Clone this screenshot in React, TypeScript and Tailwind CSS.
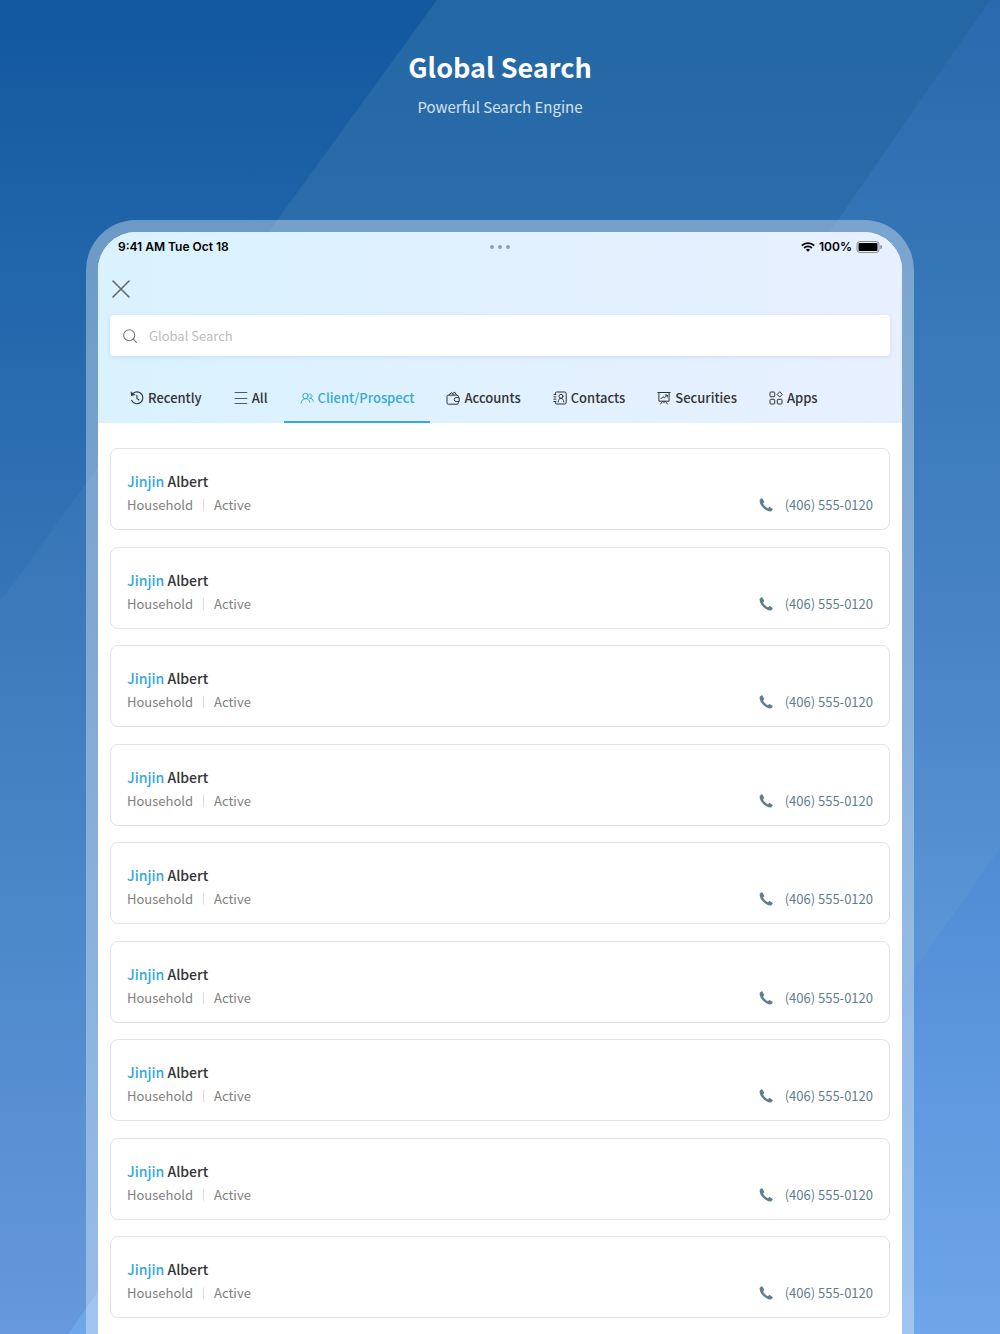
const tabs = [
  { id: "recently", label: "Recently" },
  { id: "all", label: "All" },
  { id: "clients", label: "Client/Prospect" },
  { id: "accounts", label: "Accounts" },
  { id: "contacts", label: "Contacts" },
  { id: "securities", label: "Securities" },
  { id: "apps", label: "Apps" },
]

const results = Array.from({ length: 9 }, (_, i) => ({
  id: i,
  match: "Jinjin",
  rest: "Albert",
  type: "Household",
  status: "Active",
  phone: "(406) 555-0120",
}))

function TabIcon({ id }: { id: string }) {
  if (id === "recently") {
    return (
      <svg viewBox="0 0 14 14" className="size-3.5" fill="none" stroke="currentColor" strokeWidth="1.1" strokeLinecap="round" strokeLinejoin="round">
        <path d="M1.7 4.1A5.9 5.9 0 1 1 1.6 9.3" />
        <path d="M.9 1.2l.6 3.3 3.3-.6z" fill="currentColor" strokeWidth=".6" />
        <path d="M6.9 4.2v3.1l2 1.7" />
      </svg>
    )
  }
  if (id === "all") {
    return (
      <svg viewBox="0 0 14 14" className="size-3.5" fill="none" stroke="currentColor" strokeWidth="1">
        <path d="M.7 1.5h12.6M.7 7.5h12.6M.7 12.5h12.6" opacity=".8" />
      </svg>
    )
  }
  if (id === "clients") {
    return (
      <svg viewBox="0 0 14 14" className="size-3.5" fill="none" stroke="currentColor" strokeWidth="1" strokeLinecap="round">
        <circle cx="5.5" cy="5" r="2.7" />
        <path d="M1 12c.5-2.6 2-4.3 4.5-4.3S9.300 9 9.800 11.200" />
        <path d="M9 3.200a2.100 2.100 0 1 1 .6 4c1.900-.2 3.300 1 3.700 3.200" />
      </svg>
    )
  }
  if (id === "accounts") {
    return (
      <svg viewBox="0 0 14 14" className="size-3.5" fill="none" stroke="currentColor" strokeWidth="1" strokeLinejoin="round">
        <path d="M12.5 6.500V5.700A1.500 1.500 0 0 0 11 4.200H2.500A1.500 1.500 0 0 0 1 5.700v6A1.500 1.500 0 0 0 2.500 13.200H11a1.500 1.500 0 0 0 1.500-1.500v-1" />
        <path d="M13.200 6.600H10.200a1.900 1.900 0 0 0 0 3.900h3z" />
        <path d="M2.600 4l3-2.400L7.300 4M6.400 2.500L8.800 1.200 10.500 4" />
      </svg>
    )
  }
  if (id === "contacts") {
    return (
      <svg viewBox="0 0 14 14" className="size-3.5" fill="none" stroke="currentColor" strokeWidth="1" strokeLinecap="round">
        <path d="M2.200 2.600A1.500 1.500 0 0 1 3.700 1h8A1.500 1.500 0 0 1 13.200 2.500v9a1.500 1.500 0 0 1-1.500 1.500h-8a1.500 1.500 0 0 1-1.500-1.600" />
        <path d="M.9 3.600h2M.9 5.900h2M.9 8.200h2M.9 10.500h2" />
        <circle cx="8" cy="5.300" r="2" />
        <path d="M5.200 11c.2-2.300 1.200-3.700 2.800-3.700s2.600 1.400 2.800 3.700" />
      </svg>
    )
  }
  if (id === "securities") {
    return (
      <svg viewBox="0 0 14 14" className="size-3.5" fill="none" stroke="currentColor" strokeWidth="1" strokeLinecap="round" strokeLinejoin="round">
        <path d="M.9 1.500h12.200M1.900 1.500v8.700h10.200V1.500M7 10.200v1.600M5.500 10.600l-2 2.400M8.500 10.600l2 2.400" />
        <path d="M4 7.700l2-2 1.500 1.200 2.600-2.600M8.300 4h2v2" />
      </svg>
    )
  }
  return (
    <svg viewBox="0 0 14 14" className="size-3.5" fill="none" stroke="currentColor" strokeWidth="1">
      <rect x="1" y="1" width="4.700" height="4.700" rx="0.800" />
      <rect x="1" y="8.300" width="4.700" height="4.700" rx="0.800" />
      <rect x="8.300" y="8.300" width="4.700" height="4.700" rx="0.800" />
      <path d="M10.700.8l2.600 2.600-2.600 2.600-2.600-2.600z" strokeLinejoin="round" />
    </svg>
  )
}

function Backdrop() {
  return (
    <svg className="absolute inset-0 size-full" viewBox="0 0 1000 1334" preserveAspectRatio="none" aria-hidden="true">
      <defs>
        <linearGradient id="sky" gradientUnits="userSpaceOnUse" x1="0" y1="0" x2="0" y2="1334">
          <stop offset="0" stopColor="#12589e" />
          <stop offset="0.3" stopColor="#296cb0" />
          <stop offset="0.45" stopColor="#3675b7" />
        </linearGradient>
        <linearGradient id="band" gradientUnits="userSpaceOnUse" x1="0" y1="0" x2="0" y2="1334">
          <stop offset="0" stopColor="#2267a3" />
          <stop offset="0.16" stopColor="#2b6cab" />
          <stop offset="0.45" stopColor="#3b79ba" />
          <stop offset="0.7" stopColor="#4c89ca" />
          <stop offset="1" stopColor="#6698db" />
        </linearGradient>
        <linearGradient id="side" gradientUnits="userSpaceOnUse" x1="0" y1="0" x2="0" y2="1334">
          <stop offset="0" stopColor="#296aae" />
          <stop offset="0.25" stopColor="#3879b9" />
          <stop offset="0.45" stopColor="#4682c4" />
          <stop offset="0.7" stopColor="#5a95d5" />
        </linearGradient>
        <linearGradient id="corner" gradientUnits="userSpaceOnUse" x1="0" y1="850" x2="0" y2="1334">
          <stop offset="0" stopColor="#4f8cd4" />
          <stop offset="1" stopColor="#6fa5e9" />
        </linearGradient>
      </defs>
      <rect width="1000" height="1334" fill="url(#sky)" />
      <path d="M437 0H1000V1334H0V602z" fill="url(#band)" />
      <path d="M990 0H1000V1334H68z" fill="url(#side)" />
      <path d="M1000 848V1334H68L110 1274H700z" fill="url(#corner)" />
    </svg>
  )
}

function StatusBar() {
  return (
    <div className="grid h-[30px] grid-cols-3 items-center px-5 font-[Inter,sans-serif] text-xs font-semibold text-black">
      <span>9:41 AM Tue Oct 18</span>
      <span className="flex justify-center gap-1" aria-hidden="true">
        <i className="size-1 rounded-full bg-[#90a0ac]" />
        <i className="size-1 rounded-full bg-[#90a0ac]" />
        <i className="size-1 rounded-full bg-[#90a0ac]" />
      </span>
      <span className="flex items-center justify-end gap-1">
        <svg viewBox="0 0 14 10" className="h-2.5 w-3.5" fill="none" stroke="currentColor" strokeWidth="1.8">
          <path d="M.8 3.600a8.800 8.800 0 0 1 12.400 0M3.100 6a5.500 5.500 0 0 1 7.800 0" />
          <path d="M7 9.800L4.900 7.800a3 3 0 0 1 4.200 0z" fill="currentColor" stroke="none" />
        </svg>
        <span>100%</span>
        <svg viewBox="0 0 26 12" className="h-3 w-[26px]">
          <rect x="1" y=".5" width="22" height="11" rx="3" fill="none" stroke="#000" opacity=".4" />
          <rect x="2.500" y="2" width="19" height="8" rx="1" />
          <path d="M24.300 4v4a2 2 0 0 0 0-4z" opacity=".4" />
        </svg>
      </span>
    </div>
  )
}

export default function App() {
  return (
    <div className="relative font-['Noto_Sans_CJK_JP','Noto_Sans',sans-serif]">
      <Backdrop />
      <main className="relative flex min-h-screen flex-col">
        <header className="flex h-[220px] flex-col items-center pt-[47px] text-center text-white">
          <h1 className="text-[27px] leading-10 font-bold">Global Search</h1>
          <p className="mt-2 text-[15px] leading-6 text-white/80">Powerful Search Engine</p>
        </header>

        <div className="mx-[86px] flex flex-1 flex-col rounded-t-[50px] bg-white/35 px-3 pt-3">
          <div className="flex flex-1 flex-col overflow-hidden rounded-t-[38px] bg-white">
            <div className="bg-linear-to-r from-[#d9f2fe] via-[#e1f1ff] to-[#e8f0ff]">
              <StatusBar />
              <div className="px-3 pt-[13px]">
                <button type="button" aria-label="Close" className="flex size-7 items-center text-[#666]">
                  <svg viewBox="0 0 20 20" className="size-5" stroke="currentColor" strokeWidth="1.6" strokeLinecap="round">
                    <path d="M3 2l16 16M19 2L3 18" />
                  </svg>
                </button>
                <label className="mt-3 flex h-[41px] items-center gap-3 rounded-sm bg-white px-[13px] shadow-[0_1px_4px_rgba(60,110,160,0.15)]">
                  <svg viewBox="0 0 14 14" className="size-3.5 text-[#777]" fill="none" stroke="currentColor" strokeWidth="1.1" strokeLinecap="round">
                    <circle cx="6.2" cy="6.2" r="5.5" />
                    <path d="M10.2 10.2l3.200 3.200" />
                  </svg>
                  <input type="search" aria-label="Global Search" placeholder="Global Search" className="min-w-0 flex-1 bg-transparent text-[13px] outline-none placeholder:text-[#bdbdbd]" />
                </label>
              </div>
              <nav className="mt-[17px] flex px-4">
                {tabs.map((tab) => (
                  <button
                    key={tab.id}
                    type="button"
                    className={
                      tab.id === "clients"
                        ? "flex h-[50px] items-center gap-1 border-b-2 border-[#35a8dc] px-4 pt-0.5 text-[13px] font-medium text-[#35a8dc]"
                        : "flex h-[50px] items-center gap-1 border-b-2 border-transparent px-4 pt-0.5 text-[13px] font-medium text-[#333]"
                    }
                  >
                    <TabIcon id={tab.id} />
                    {tab.label}
                  </button>
                ))}
              </nav>
            </div>

            <ul className="flex flex-1 flex-col justify-between gap-4 px-3 pt-[25px] pb-4">
              {results.map((item) => (
                <li key={item.id} className="flex h-[82px] items-end justify-between rounded-lg border border-[#e2e2e2] px-4 pb-3">
                  <div>
                    <h2 className="text-sm leading-6 font-medium text-[#333]">
                      <span className="text-[#35a8dc]">{item.match}</span> {item.rest}
                    </h2>
                    <p className="flex items-center gap-2.5 text-[13px] leading-6 text-[#808080]">
                      {item.type}
                      <span className="h-3 w-px bg-[#ddd]" />
                      {item.status}
                    </p>
                  </div>
                  <a href="tel:4065550120" className="flex items-center gap-3 text-[13px] leading-6 text-[#5f7f8f]">
                    <svg viewBox="0 0 14 14" className="size-3.5" fill="currentColor">
                      <path d="M2.200.5L.7 1.700C-.2 6.700 6.500 13.700 12 13.500l1.500-1.500c.4-.5.300-.9-.2-1.300l-2.200-1.500c-.5-.3-.9-.2-1.300.2l-.8.8C7.200 9.600 4.700 7.200 4.100 5.400l.8-.8c.4-.4.400-.8.1-1.300L3.500.7C3.200.2 2.700.1 2.200.5z" />
                    </svg>
                    {item.phone}
                  </a>
                </li>
              ))}
            </ul>
          </div>
        </div>
      </main>
    </div>
  )
}
